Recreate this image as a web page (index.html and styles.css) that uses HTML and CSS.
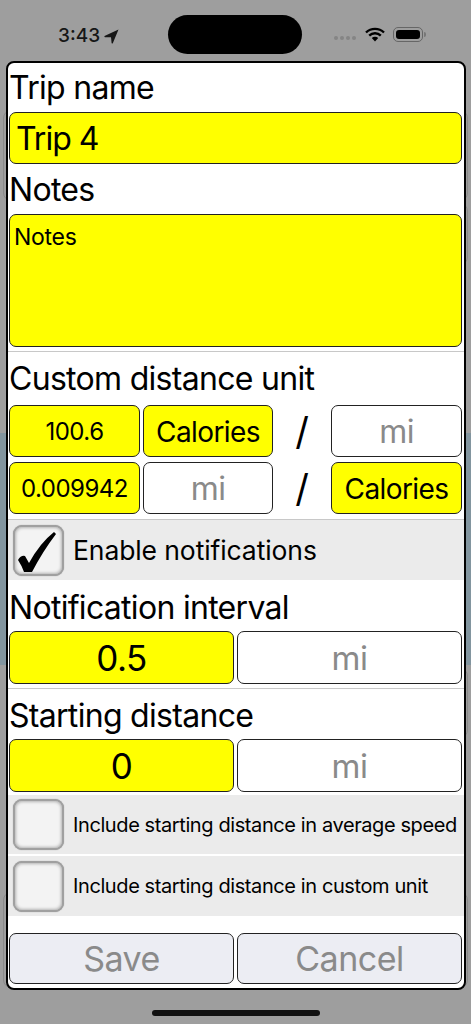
FILE: index.html
```html
<!DOCTYPE html>
<html>
<head>
    <title>Edit Trip</title>
    <link rel="stylesheet" href="styles.css">
</head>
<body>
    <!-- dimmed screen behind the dialog, only its edges show -->
    <div class="backdrop">
        <div class="back-band"></div>
        <div class="back-box box-a"></div>
        <div class="back-box box-b"></div>
        <div class="back-box box-c"></div>
        <div class="back-box box-d"></div>
    </div>

    <div class="status-bar">
        <div class="status-left">
            <span class="clock">3:43</span>
            <svg class="location" width="15" height="15" viewBox="0 0 15 15"><path d="M14.5 0.5 L0.5 7 Q0 8 1 8.2 L7 8.2 L7.6 14 Q8 15 8.8 14.2 Z" fill="#161616"/></svg>
        </div>
        <div class="island"></div>
        <div class="status-right">
            <div class="dots"><i></i><i></i><i></i><i></i></div>
            <svg class="wifi" width="20" height="15" viewBox="0 0 20 15">
                <path d="M1 5.5 A13 13 0 0 1 19 5.5" fill="none" stroke="#000" stroke-width="2.4"/>
                <path d="M4.2 8.6 A8.5 8.5 0 0 1 15.8 8.6" fill="none" stroke="#000" stroke-width="2.4"/>
                <path d="M10 14.5 L6.8 11 A4.6 4.6 0 0 1 13.2 11 Z" fill="#000"/>
            </svg>
            <div class="battery"><div class="battery-fill"></div></div>
            <div class="battery-cap"></div>
        </div>
    </div>

    <div class="panel">
        <div class="label name-label">Trip name</div>
        <div class="field yellow name-field">Trip 4</div>
        <div class="label notes-label">Notes</div>
        <div class="field yellow notes-field">Notes</div>
        <div class="divider"></div>

        <div class="label custom-label">Custom distance unit</div>
        <div class="unit-row">
            <div class="field yellow num">100.6</div>
            <div class="field yellow unit">Calories</div>
            <div class="slash">/</div>
            <div class="field unit muted">mi</div>
        </div>
        <div class="unit-row second">
            <div class="field yellow num">0.009942</div>
            <div class="field unit muted">mi</div>
            <div class="slash">/</div>
            <div class="field yellow unit">Calories</div>
        </div>
        <div class="divider after-units"></div>

        <div class="check-row">
            <div class="checkbox">
                <svg class="tick" width="47" height="47" viewBox="0 0 47 47"><path d="M3 33 Q6 28 10 29 L14 36 Q25 16 39 5 L41 7 Q28 24 17 45 L9 45 Q7 39 3 33 Z"/></svg>
            </div>
            <span class="check-text">Enable notifications</span>
        </div>

        <div class="label interval-label">Notification interval</div>
        <div class="pair">
            <div class="field yellow big">0.5</div>
            <div class="field big muted">mi</div>
        </div>
        <div class="divider"></div>

        <div class="label start-label">Starting distance</div>
        <div class="pair">
            <div class="field yellow big">0</div>
            <div class="field big muted">mi</div>
        </div>

        <div class="check-row first-small">
            <div class="checkbox"></div>
            <span class="check-text small-text">Include starting distance in average speed</span>
        </div>
        <div class="check-row second-small">
            <div class="checkbox"></div>
            <span class="check-text small-text">Include starting distance in custom unit</span>
        </div>

        <div class="actions">
            <div class="field action">Save</div>
            <div class="field action">Cancel</div>
        </div>
    </div>

    <div class="home-bar"></div>
</body>
</html>
```

FILE: styles.css
```css
body {
    margin: 0;
    height: 1024px;
    overflow: hidden;
    position: relative;
    background-color: #9e9e9e;
    font-family: Inter, "Liberation Sans", Arial, sans-serif;
    color: #000;
}

.backdrop {
    position: absolute;
    top: 0;
    left: 0;
    width: 471px;
    height: 1024px;
}
.back-band {
    position: absolute;
    top: 433px;
    left: 0;
    width: 100%;
    height: 232px;
    background-color: #82959f;
}
.back-box {
    position: absolute;
    left: 3px;
    width: 465px;
    box-sizing: border-box;
    border: 1px solid #8a8a8a;
    border-radius: 8px;
}
.box-a { top: 110px; height: 91px; }
.box-b { top: 203px; height: 62px; left: 20px; width: 448px; }
.box-c { top: 668px; height: 70px; left: 20px; width: 448px; }
.box-d { top: 892px; height: 96px; }

.status-bar {
    position: relative;
    height: 61px;
    display: flex;
    align-items: flex-start;
}
.status-left {
    width: 168px;
    padding: 25px 0 0 58px;
    box-sizing: border-box;
    display: flex;
    align-items: center;
    gap: 4px;
}
.clock { font-size: 19px; line-height: 22px; font-weight: 500; color: #161616; }
.island {
    width: 134px;
    height: 39px;
    margin-top: 15px;
    background-color: #000;
    border-radius: 20px;
}
.status-right {
    padding: 27px 0 0 32px;
    display: flex;
    align-items: center;
}
.dots { display: flex; gap: 2px; margin-top: 6px; margin-right: 9px; }
.dots i { width: 4px; height: 4px; border-radius: 2px; background-color: #858585; }
.wifi { margin-right: 8px; }
.battery {
    width: 30px;
    height: 15px;
    box-sizing: border-box;
    border: 1px solid #666;
    border-radius: 5px;
    padding: 2px;
}
.battery-fill { height: 100%; background-color: #000; border-radius: 3px; }
.battery-cap { width: 2px; height: 5px; margin-left: 1px; background-color: #777; border-radius: 0 2px 2px 0; }

.panel {
    position: relative;
    width: 460px;
    height: 929px;
    margin-left: 6px;
    box-sizing: border-box;
    border: 2px solid #000;
    border-radius: 8px;
    background-color: #fff;
    padding: 0 2px 0 1px;
    overflow: hidden;
}
.label {
    display: flex;
    align-items: center;
    font-size: 32px;
    letter-spacing: -0.7px;
}
.name-label { height: 49px; }
.notes-label { height: 50px; }
.custom-label { height: 53px; }
.interval-label { height: 51px; padding-top: 4px; box-sizing: border-box; }
.start-label { height: 50px; padding-top: 2px; box-sizing: border-box; }

.field {
    box-sizing: border-box;
    border: 1px solid #222;
    border-radius: 7px;
    background-color: #fff;
    display: flex;
    align-items: center;
    justify-content: center;
    height: 52px;
}
.yellow { background-color: #ff0; }
.muted { color: #8a8a8a; }
.name-field {
    font-size: 32px;
    letter-spacing: -1px;
    justify-content: flex-start;
    padding-left: 6px;
}
.notes-field {
    height: 133px;
    font-size: 23px;
    letter-spacing: -0.3px;
    align-items: flex-start;
    justify-content: flex-start;
    padding: 8px 4px;
}
.divider {
    height: 1px;
    margin: 4px -2px 0 -1px;
    background-color: #c8c8c8;
}
.divider.after-units { margin-top: 5px; }

.unit-row {
    display: grid;
    grid-template-columns: 131px 133px 58px 131px;
}
.unit-row .field:nth-child(2) { margin-left: 3px; }
.unit-row .field { padding-top: 1px; }
.unit-row .num { font-size: 24px; letter-spacing: -0.5px; }
.unit-row .unit { font-size: 28px; letter-spacing: -0.6px; }
.unit-row .unit.muted { font-size: 32px; }
.unit-row.second { margin-top: 5px; }
.slash { font-size: 38px; text-align: center; line-height: 52px; }

.check-row {
    display: flex;
    align-items: center;
    height: 60px;
    margin: 0 -2px 0 -1px;
    background-color: #ebebeb;
    padding-left: 5px;
}
.first-small { margin-top: 3px; height: 59px; }
.second-small { margin-top: 2px; }
.checkbox {
    width: 51px;
    height: 51px;
    box-sizing: border-box;
    border: 2px solid #a0a0a0;
    border-radius: 9px;
    background-color: #f3f3f3;
    box-shadow: inset 0 0 3px 1px #b4b4b4, 0 0 1px #8c8c8c;
    flex-shrink: 0;
}
.tick { display: block; filter: blur(0.5px); }
.check-text { margin-left: 9px; font-size: 26.5px; letter-spacing: -0.1px; }
.small-text { font-size: 20px; letter-spacing: -0.4px; white-space: nowrap; }

.pair {
    display: grid;
    grid-template-columns: 1fr 1fr;
    column-gap: 3px;
}
.pair .field { height: 53px; }
.big { font-size: 35px; letter-spacing: -0.5px; }
.pair .muted { font-size: 33px; }

.actions {
    display: grid;
    grid-template-columns: 1fr 1fr;
    column-gap: 3px;
    margin-top: 17px;
}
.action {
    background-color: #ecedf3;
    color: #8a8a8a;
    font-size: 34px;
    letter-spacing: -0.5px;
    height: 51px;
}

.home-bar {
    position: relative;
    width: 168px;
    height: 6px;
    margin: 20px 0 0 152px;
    background-color: #111;
    border-radius: 3px;
}
```
